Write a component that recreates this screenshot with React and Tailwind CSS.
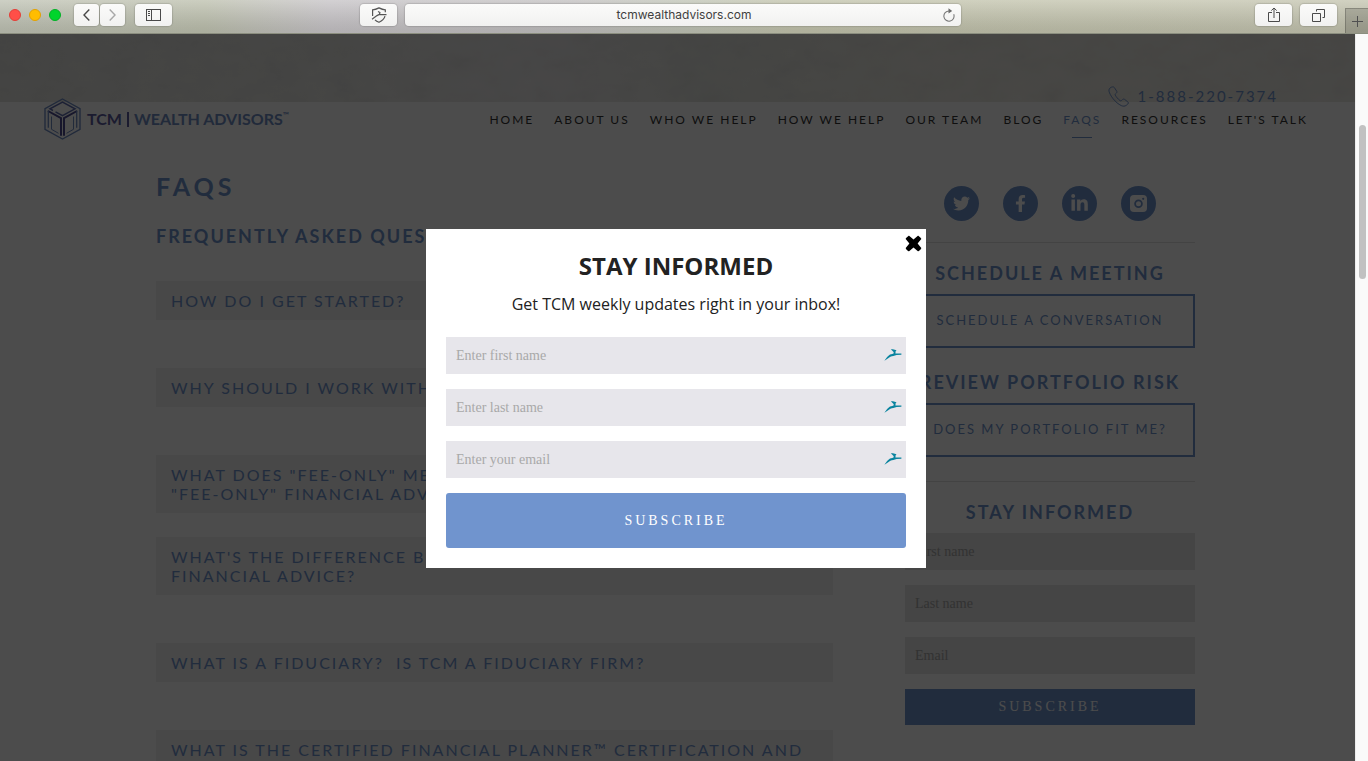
import { useState } from "react";
import { FaTwitter, FaFacebookF, FaLinkedinIn } from "react-icons/fa";

const navLinks = [
  "Home",
  "About us",
  "Who we help",
  "How we help",
  "Our team",
  "Blog",
  "FAQs",
  "Resources",
  "Let's talk",
];

const questions = [
  { text: "How do I get started?" },
  { text: "Why should I work with TCM?" },
  {
    text: 'What does "fee-only" mean? Why choose a\n"fee-only" financial advisor?',
    tight: true,
  },
  {
    text: "What's the difference between advice and\nfinancial advice?",
  },
  { text: "What is a fiduciary?\u00a0 Is TCM a fiduciary firm?" },
  { text: "What is the Certified Financial Planner™ certification and" },
];

const InstagramIcon = () => (
  <svg width="17" height="17" viewBox="0 0 17 17" fill="none">
    <rect width="17" height="17" rx="4" fill="white" />
    <circle cx="8.5" cy="8.7" r="3.4" stroke="#7094ce" strokeWidth="1.8" />
    <circle cx="13.2" cy="3.8" r="1.1" fill="#7094ce" />
  </svg>
);

const socials = [
  { name: "Twitter", icon: <FaTwitter size={17} /> },
  { name: "Facebook", icon: <FaFacebookF size={17} /> },
  { name: "LinkedIn", icon: <FaLinkedinIn size={19} /> },
  { name: "Instagram", icon: <InstagramIcon /> },
];

const ToolbarButton = ({ label, className = "w-[37px]", children }) => (
  <button
    aria-label={label}
    className={`flex h-[22px] items-center justify-center rounded bg-linear-to-b from-[#fbfbfa] to-[#f1f1f0] text-[#4a4a4a] shadow-[0_0_1px_1px_rgba(0,0,0,0.12)] ${className}`}
  >
    {children}
  </button>
);

const BrowserBar = () => (
  <div className="relative flex h-[34px] shrink-0 items-start border-b border-[#8b8e7f] pt-1">
    <div className="absolute inset-0 bg-[linear-gradient(to_right,#c1c4b6,#bfc2b0_15%,#c8c5c8_24%,#c4c2c2_42%,#c2c6b8_50%,#c4c5ae_58%,#c6c6b2)]" />
    <div className="absolute inset-0 bg-linear-to-b from-white/20 to-black/10" />
    <div className="relative flex w-[360px] items-center pl-[9px]">
      <div className="flex gap-2">
        <span className="size-3 rounded-full border border-[#e33e37] bg-[#ff4f48]" />
        <span className="size-3 rounded-full border border-[#e3a100] bg-[#ffbd00]" />
        <span className="size-3 rounded-full border border-[#00b125] bg-[#00d42c]" />
      </div>
      <div className="ml-[13px] flex gap-px">
        <ToolbarButton label="Back" className="w-[25px]">
          <svg width="7" height="12" viewBox="0 0 7 12" fill="none">
            <path d="M6.3 .6 1 6l5.3 5.4" stroke="#484848" strokeWidth="1.4" />
          </svg>
        </ToolbarButton>
        <ToolbarButton label="Forward" className="w-[25px]">
          <svg width="7" height="12" viewBox="0 0 7 12" fill="none">
            <path d="M.7 .6 6 6 .7 11.4" stroke="#a8a8a8" strokeWidth="1.4" />
          </svg>
        </ToolbarButton>
      </div>
      <ToolbarButton label="Show sidebar" className="ml-2.5 w-[37px]">
        <svg width="15" height="12" viewBox="0 0 15 12" fill="none" stroke="#4a4a4a">
          <rect x=".5" y=".5" width="14" height="11" />
          <path d="M5.5 .5v11M2 2.5h2M2 4.5h2M2 6.5h2" />
        </svg>
      </ToolbarButton>
    </div>
    <div className="relative flex flex-1 gap-2">
      <ToolbarButton label="Password manager">
        <svg width="16" height="16" viewBox="0 0 16 16" fill="none" stroke="#555" strokeWidth="1.2">
          <path d="M1.6 9V2.800C4.200 2.800 6 2 8 .9c2 1.100 3.800 1.900 6.300 1.900v2.500M14 9.200c-.8 3-3.100 4.900-6 6.100-1.500-.6-2.900-1.400-4-2.500" />
          <path d="M1 12.300 6 8.600l2.500-1.300.4-1.800-1.900-1M8.500 7.700 15.500 7.600" />
        </svg>
      </ToolbarButton>
      <div className="flex h-[22px] flex-1 items-center rounded bg-linear-to-b from-[#fbfbfa] to-[#f1f1f0] shadow-[0_0_1px_1px_rgba(0,0,0,0.12)]">
        <input
          aria-label="Address"
          defaultValue="tcmwealthadvisors.com"
          className="min-w-0 flex-1 bg-transparent pl-5 text-center font-['Inter',sans-serif] text-xs text-[#3f3f3f] outline-none"
        />
        <button aria-label="Reload" className="mr-1.5">
          <svg width="12" height="14" viewBox="0 0 12 14" fill="none">
            <path d="M10.700 6.200A5.100 5.100 0 1 1 6 3" stroke="#7a7a7a" strokeWidth="1.100" />
            <path d="M5.500 .3 9.200 3 5.500 5.600z" fill="#6b6b6b" />
          </svg>
        </button>
      </div>
    </div>
    <div className="relative flex w-[407px] justify-end">
      <div className="flex gap-2">
        <ToolbarButton label="Share">
          <svg width="12" height="16" viewBox="0 0 12 16" fill="none" stroke="#4a4a4a">
            <path d="M4 5.500H.5v9h11v-9H8M6 11V1M3.300 3.600 6 1l2.700 2.600" />
          </svg>
        </ToolbarButton>
        <ToolbarButton label="Show tabs">
          <svg width="13" height="13" viewBox="0 0 13 13" fill="none" stroke="#4a4a4a">
            <path d="M.5 4.500h8v8h-8zM4.500 2.500v-2h8v8h-2" />
          </svg>
        </ToolbarButton>
      </div>
      <button
        aria-label="New tab"
        className="mt-1 ml-2 flex h-[25px] w-[23px] items-center justify-center border-t border-l border-black/20 bg-black/15"
      >
        <svg width="11" height="11" viewBox="0 0 11 11" stroke="#505050">
          <path d="M5.500 0v11M0 5.500h11" />
        </svg>
      </button>
    </div>
  </div>
);

const Logo = () => (
  <a href="#" aria-label="TCM Wealth Advisors" className="flex items-center gap-1.5">
    <svg width="37" height="42" viewBox="0 0 37 42" fill="none">
      <path d="M18.500 1 36 10.600v20.800L18.500 41 1 31.400V10.600z" stroke="#6f8cc4" strokeWidth="1.400" />
      <path d="M9 12.500 6 10.800 18.500 4l12.500 6.800-12.500 6.800-7-3.800" stroke="#5f6cae" strokeWidth="1.500" />
      <path d="M4 13 17 20.200v17.600M33 13l-13 7.200v17.600" stroke="#4f4c92" strokeWidth="2" />
      <path d="M4.300 12.500v17.300M32.700 12.500v17.300" stroke="#6f8cc4" strokeWidth="1.300" />
      <path d="M7.500 18.500v12.800l7 4M29.500 18.500v12.800l-7 4" stroke="#6f8cc4" strokeWidth="1" />
    </svg>
    <span className="flex items-center gap-[5px] text-base font-bold">
      <span className="text-[#5b5a9e]">TCM</span>
      <span className="h-[15px] w-0.5 bg-[#5b5a9e]" />
      <span className="flex text-[#6f8cc4]">
        Wealth Advisors
        <span className="text-[8px] leading-4">™</span>
      </span>
    </span>
  </a>
);

const Header = () => (
  <header className="relative flex items-start justify-between pr-[47px] pl-11">
    <div className="pt-16">
      <Logo />
    </div>
    <div className="flex flex-col gap-0.5 pt-[50px]">
      <a
        href="tel:18882207374"
        className="mr-[30px] flex h-6 items-center gap-[9px] self-end text-[15px] tracking-[2px] text-[#7094ce]"
      >
        <svg width="21" height="21" viewBox="0 0 21 21" fill="none" stroke="currentColor">
          <path d="M3.300 1.200C1.500 2 .7 3.400 1 5.200c.8 4 6.500 11.800 12.300 14.400 1.700.8 3.600.8 5-.3l1.500-1.300c.8-.7.700-1.500 0-2.100l-3.200-2.500c-.7-.5-1.400-.4-2 .1l-1 1c-.5.5-1.100.5-1.600.1C9.800 12.800 8.300 11 7.300 9.200c-.3-.6-.2-1.100.3-1.500l.8-.7c.6-.5.7-1.100.3-1.800L6.500 1.800C6 1 5.400.700 4.600.900z" />
        </svg>
        1-888-220-7374
      </a>
      <nav className="flex gap-5 text-xs leading-5 tracking-[2px]">
        {navLinks.map((link) => (
          <a
            key={link}
            href="#"
            className={`flex flex-col items-center gap-[7px] ${
              link === "FAQs" ? "text-[#7094ce]" : "text-[#333333]"
            }`}
          >
            {link}
            {link === "FAQs" && <span className="h-px w-5 bg-[#7094ce]" />}
          </a>
        ))}
      </nav>
    </div>
  </header>
);

const SideTitle = ({ children }) => (
  <h3 className="mb-1.5 text-center text-lg leading-[30px] font-bold tracking-[2px] text-[#7094ce]">
    {children}
  </h3>
);

const SideLink = ({ children }) => (
  <a
    href="#"
    className="flex h-[54px] items-center justify-center border-2 border-[#7094ce] text-[13px] tracking-[2px] text-[#7094ce]"
  >
    {children}
  </a>
);

const Sidebar = () => (
  <aside className="w-[290px] shrink-0 pt-[46px]">
    <div className="flex justify-center gap-6">
      {socials.map((social) => (
        <a
          key={social.name}
          href="#"
          aria-label={social.name}
          className="flex size-[35px] items-center justify-center rounded-full bg-[#7094ce] text-white"
        >
          {social.icon}
        </a>
      ))}
    </div>
    <hr className="mt-[21px] mb-[15px] border-[#e0e0e0]" />
    <SideTitle>Schedule a meeting</SideTitle>
    <SideLink>Schedule a conversation</SideLink>
    <div className="mt-[19px]">
      <SideTitle>Review portfolio risk</SideTitle>
      <SideLink>Does my portfolio fit me?</SideLink>
    </div>
    <hr className="mt-6 mb-[15px] border-[#e0e0e0]" />
    <SideTitle>Stay informed</SideTitle>
    <form className="flex flex-col gap-[15px] font-['Liberation_Serif',serif] text-sm">
      {["First name", "Last name", "Email"].map((label) => (
        <input
          key={label}
          aria-label={label}
          placeholder={label}
          className="h-[37px] bg-[#e6e6e6] px-2.5 placeholder:text-[#a9a9a9]"
        />
      ))}
      <button type="button" className="h-9 bg-[#7094ce] tracking-[3px] text-white uppercase">
        Subscribe
      </button>
    </form>
  </aside>
);

const RunnerIcon = () => (
  <svg width="18" height="12" viewBox="0 0 18 12" className="absolute top-3 right-1">
    <path
      d="M.4 11.700C2.500 9 3.800 6.800 6 5.500 7.500 4.900 9 5 9.500 4.400c.3-.8.300-1.400-.2-1.700L6.800.2l2.100.1 3.700.9-.9.700-.3 2.500 6 .1v1.200l-4.800.2c-2.200 1.100-4.300.9-6.200 1.800C4.300 8.900 2.700 10.600.4 11.700z"
      fill="#0a849f"
    />
  </svg>
);

const SubscribeModal = ({ onClose }) => (
  <div
    role="dialog"
    aria-labelledby="modal-title"
    className="relative w-[500px] bg-white p-5 text-[#222222]"
  >
    <button aria-label="Close" onClick={onClose} className="absolute top-1.5 right-1">
      <svg width="17" height="17" viewBox="0 0 17 17">
        <path
          d="M4.100 .7 8.500 4.400 12.900 .7c.6-.3 3.700 2.700 3.400 3.400L12.600 8.500l3.700 4.400c.3.700-2.800 3.700-3.400 3.400L8.500 12.600l-4.400 3.700c-.6.300-3.700-2.700-3.400-3.400L4.400 8.500.7 4.100C.4 3.400 3.500.400 4.100.7z"
          fill="black"
        />
      </svg>
    </button>
    <div className="text-center font-['Open_Sans',sans-serif]">
      <h2 id="modal-title" className="text-2xl leading-[34px] font-bold">
        STAY INFORMED
      </h2>
      <p className="mt-[9px] mb-[21px] text-base">
        Get TCM weekly updates right in your inbox!
      </p>
    </div>
    <form className="flex flex-col gap-[15px] font-['Liberation_Serif',serif] text-sm">
      {["Enter first name", "Enter last name", "Enter your email"].map((label) => (
        <label key={label} className="relative flex">
          <input
            aria-label={label}
            placeholder={label}
            className="h-[37px] flex-1 bg-[#e7e6eb] px-2.5 placeholder:text-[#a9a9a9]"
          />
          <RunnerIcon />
        </label>
      ))}
      <button
        type="button"
        className="h-[55px] rounded-[3px] bg-[#7094ce] tracking-[3px] text-white uppercase"
      >
        Subscribe
      </button>
    </form>
  </div>
);

const App = () => {
  const [open, setOpen] = useState(true);

  return (
    <div className="flex h-screen flex-col overflow-hidden bg-white">
      <BrowserBar />
      <div className="flex min-h-0 flex-1">
        <div className="relative flex-1 overflow-hidden font-['Lato',sans-serif]">
          {/* Hero photo strip */}
          <div className="absolute inset-x-0 top-0 h-[68px] bg-[linear-gradient(to_right,#e6e6e1,#eaeae6_25%,#f0eeee_40%,#e8e9e3_52%,#f0eee6_70%,#eeece6)]">
            <svg className="size-full opacity-15">
              <filter id="grain">
                <feTurbulence type="fractalNoise" baseFrequency="0.03 0.05" numOctaves="4" />
                <feColorMatrix type="saturate" values="0" />
              </filter>
              <rect width="100%" height="100%" filter="url(#grain)" />
            </svg>
          </div>

          <div className="uppercase">
            <Header />
            <main className="flex gap-[72px] pr-[160px] pl-[156px]">
              <section className="flex-1 pt-[31px] text-[#7094ce]">
                <h1 className="text-[25px] leading-[30px] font-bold tracking-[4px]">FAQs</h1>
                <h2 className="mt-5 mb-[30px] text-lg leading-[30px] font-bold tracking-[2px]">
                  Frequently asked questions
                </h2>
                {questions.map((question) => (
                  <button
                    key={question.text}
                    className={`block w-full bg-[#f0f0f0] px-[15px] py-2.5 text-left text-base leading-[19px] tracking-[2px] whitespace-pre-line uppercase ${
                      question.tight ? "mb-6" : "mb-12"
                    }`}
                  >
                    {question.text}
                  </button>
                ))}
              </section>
              <Sidebar />
            </main>
          </div>

          {open && (
            <div className="absolute inset-0 flex items-center justify-center bg-black/70 pt-0.5 pr-[3px]">
              <SubscribeModal onClose={() => setOpen(false)} />
            </div>
          )}
        </div>

        {/* Scrollbar */}
        <div className="w-[13px] border-l border-[#ececec] bg-[#fafafa] pt-[91px] pl-[3px]">
          <div className="h-[154px] w-[7px] rounded-full bg-[#c1c1c1]" />
        </div>
      </div>
    </div>
  );
};

export default App;
